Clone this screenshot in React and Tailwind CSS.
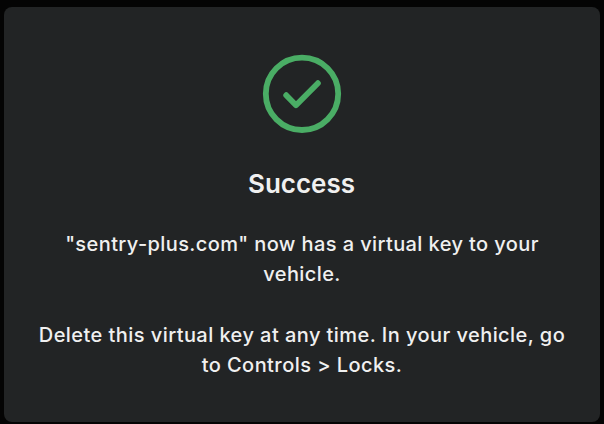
export default function App() {
  return (
    <main className="h-[424px] w-[604px] overflow-hidden bg-[#040404] px-1 pt-[7px] font-['Inter',sans-serif]">
      <section className="flex h-[415px] flex-col items-center rounded-lg bg-[#222425] pt-[47px] text-center text-[#f0f0f0]">
        <svg width="80" height="80" viewBox="0 0 80 80" fill="none" stroke="#4aad65" aria-hidden="true">
          <circle cx="40" cy="39.8" r="36.2" strokeWidth="5.8" />
          <path d="M24.2 41.2 34 51.2 55.9 29.2" strokeWidth="5.8" strokeLinecap="round" strokeLinejoin="round" />
        </svg>
        <h1 className="mt-[32px] mr-px text-[26px] leading-9 font-semibold">Success</h1>
        <p className="mt-[27px] text-[20px] leading-[30.4px] font-medium tracking-[0.4px]">
          <span className="block whitespace-nowrap">"sentry-plus.com" now has a virtual key to your</span>
          <span className="block">vehicle.</span>
        </p>
        <p className="mt-[30px] text-[20px] leading-[30.4px] font-medium tracking-[0.44px]">
          <span className="block whitespace-nowrap">Delete this virtual key at any time. In your vehicle, go</span>
          <span className="block">to Controls &gt; Locks.</span>
        </p>
      </section>
    </main>
  );
}
